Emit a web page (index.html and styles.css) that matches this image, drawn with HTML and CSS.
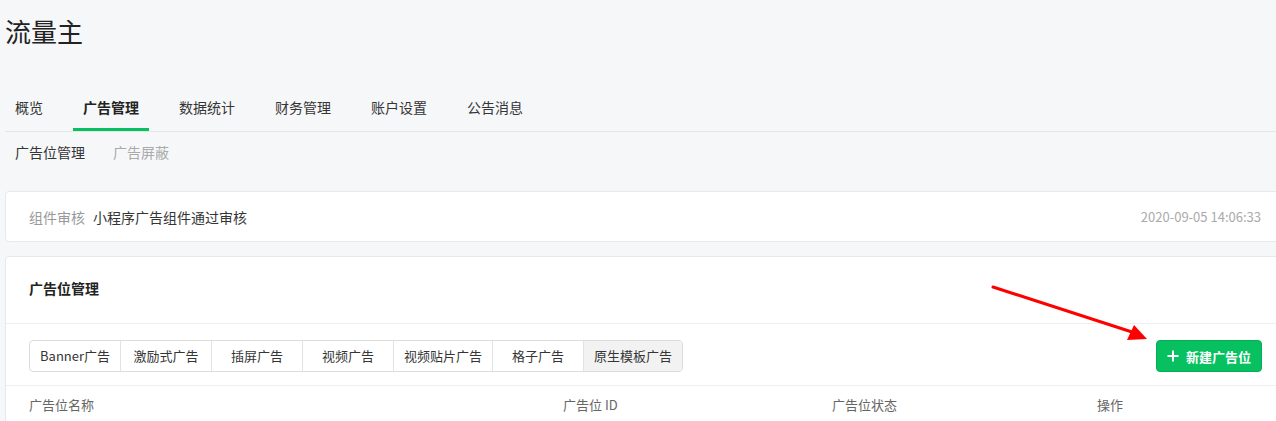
FILE: index.html
```html
<!DOCTYPE html>
<html lang="zh-CN">
<head>
    <meta charset="UTF-8">
    <title>流量主</title>
    <link rel="stylesheet" href="styles.css">
</head>
<body>
    <div class="page">
        <h1 class="title">流量主</h1>

        <div class="nav">
            <a class="nav-item">概览</a>
            <a class="nav-item active">广告管理</a>
            <a class="nav-item">数据统计</a>
            <a class="nav-item">财务管理</a>
            <a class="nav-item">账户设置</a>
            <a class="nav-item">公告消息</a>
        </div>

        <div class="subnav">
            <a class="subnav-item active">广告位管理</a>
            <a class="subnav-item">广告屏蔽</a>
        </div>

        <div class="card notice">
            <span class="notice-label">组件审核</span>
            <span class="notice-text">小程序广告组件通过审核</span>
            <span class="notice-time">2020-09-05 14:06:33</span>
        </div>

        <div class="card panel">
            <div class="panel-head">广告位管理</div>
            <div class="panel-tools">
                <div class="segments">
                    <span class="seg">Banner广告</span>
                    <span class="seg">激励式广告</span>
                    <span class="seg">插屏广告</span>
                    <span class="seg">视频广告</span>
                    <span class="seg">视频贴片广告</span>
                    <span class="seg">格子广告</span>
                    <span class="seg selected">原生模板广告</span>
                </div>
                <button class="btn-new">
                    <svg class="plus" width="12" height="12" viewBox="0 0 12 12">
                        <path d="M6 0.5v11M0.5 6h11" stroke="#fff" stroke-width="2"/>
                    </svg>
                    新建广告位
                </button>
            </div>
            <div class="table-head">
                <span class="col col-name">广告位名称</span>
                <span class="col col-id">广告位 ID</span>
                <span class="col col-status">广告位状态</span>
                <span class="col col-op">操作</span>
            </div>
        </div>
    </div>

    <!-- annotation arrow drawn over the page -->
    <svg class="arrow" width="1276" height="421" viewBox="0 0 1276 421">
        <line x1="993" y1="287" x2="1132" y2="332" stroke="#ff0000" stroke-width="3" stroke-linecap="round"/>
        <polygon points="1147,339 1127,340 1134,325" fill="#ff0000"/>
    </svg>
</body>
</html>
```

FILE: styles.css
```css
html, body {
    margin: 0;
    padding: 0;
    overflow: hidden;
}

body {
    background-color: #f6f7f9;
    font-family: "Noto Sans CJK SC", "Liberation Sans", sans-serif;
    color: #353535;
    font-size: 14px;
}

.page {
    width: 1290px;
    padding: 0 0 0 5px;
}

.title {
    margin: 0;
    padding-top: 12px;
    height: 78px;
    font-size: 26px;
    font-weight: normal;
    line-height: 38px;
    color: #222;
}

/* main tabs */
.nav {
    display: flex;
    gap: 20px;
    border-bottom: 1px solid #e4e5e7;
    height: 41px;
}

.nav-item {
    padding: 0 10px;
    line-height: 35px;
    height: 38px;
    color: #353535;
    border-bottom: 3px solid transparent;
}

.nav-item.active {
    font-weight: bold;
    color: #222;
    border-bottom-color: #07c160;
}

.subnav {
    display: flex;
    gap: 8px;
    height: 59px;
}

.subnav-item {
    padding: 0 10px;
    line-height: 40px;
    color: #353535;
}

.subnav-item:not(.active) {
    color: #aaa;
}

.card {
    background: #fff;
    border: 1px solid #e8e9eb;
    border-radius: 4px;
}

.notice {
    display: flex;
    align-items: center;
    height: 49px;
    padding: 0 15px 0 23px;
    margin-bottom: 14px;
    font-size: 14px;
}

.notice-label {
    color: #999;
    margin-right: 8px;
}

.notice-text {
    color: #353535;
    flex: 1;
}

.notice-time {
    color: #aaa;
    font-size: 13px;
    margin-right: 18px;
}

.panel {
    height: 200px;
}

.panel-head {
    padding: 0 23px;
    height: 66px;
    line-height: 62px;
    font-weight: bold;
    font-size: 14px;
    color: #222;
    border-bottom: 1px solid #eeeff1;
}

.panel-tools {
    display: flex;
    align-items: center;
    justify-content: space-between;
    height: 61px;
    padding: 0 32px 0 23px;
    border-bottom: 1px solid #eeeff1;
}

.segments {
    display: flex;
    border: 1px solid #dcdcdc;
    border-radius: 4px;
    overflow: hidden;
    height: 30px;
    margin-top: 2px;
}

.seg {
    min-width: 70px;
    padding: 0 10px;
    line-height: 30px;
    text-align: center;
    font-size: 13px;
    color: #353535;
    border-left: 1px solid #e2e2e2;
}

.seg:first-child {
    border-left: none;
}

.seg.selected {
    background-color: #f2f2f2;
}

.btn-new {
    display: flex;
    align-items: center;
    height: 32px;
    margin-top: 3px;
    padding: 0 10px 0 10px;
    background-color: #07c160;
    border: 1px solid #06ad56;
    border-radius: 4px;
    color: #fff;
    font-family: inherit;
    font-size: 13px;
    font-weight: bold;
}

.plus {
    margin-right: 7px;
}

.table-head {
    display: flex;
    height: 40px;
    line-height: 38px;
    padding-left: 23px;
    font-size: 13px;
    color: #666;
}

.col-name { width: 534px; }
.col-id { width: 269px; }
.col-status { width: 265px; }

.arrow {
    position: absolute;
    left: 0;
    top: 0;
    pointer-events: none;
}
```
